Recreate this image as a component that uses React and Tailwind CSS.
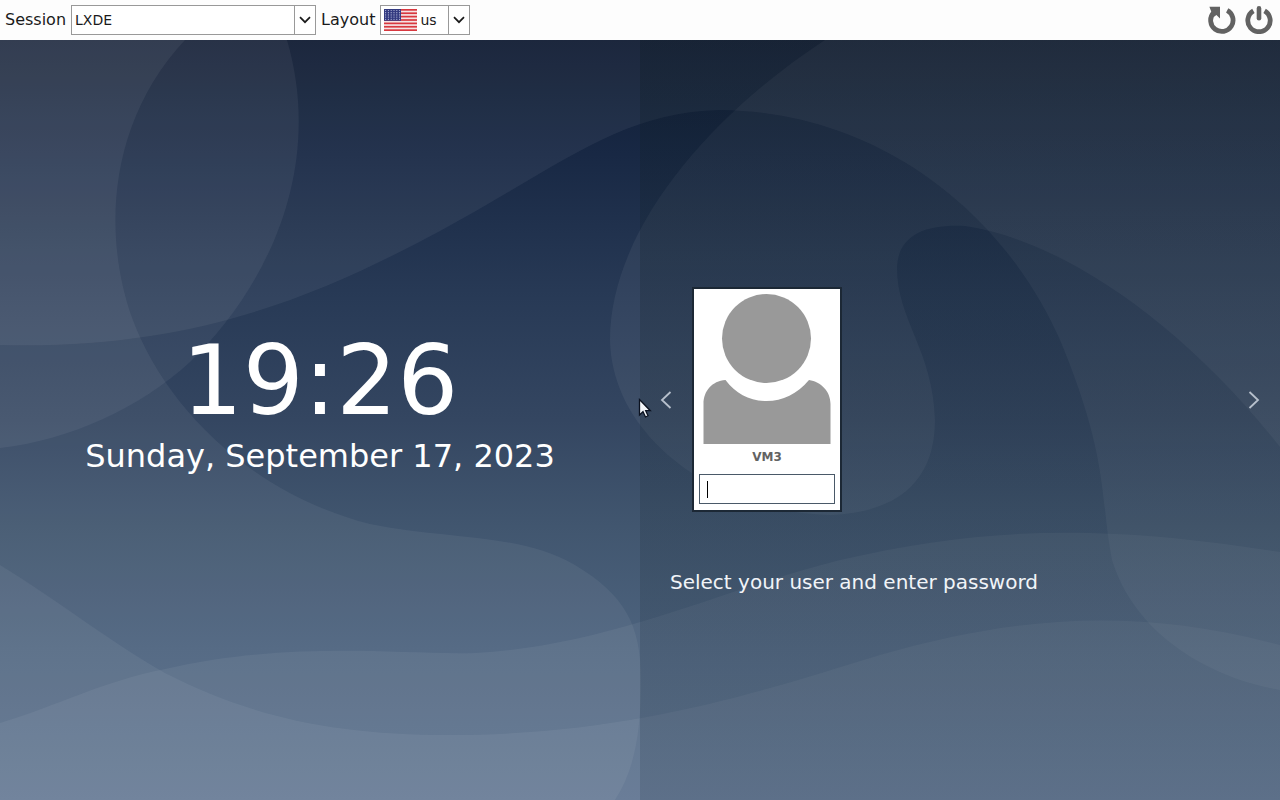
import React from "react";

const WAVES = [
  // upper sky, above the long crest
  "M0 40V345C190 350 315 298 440 231C560 166 620 112 720 110C890 112 1010 225 1060 340C1110 460 1100 500 1112 560C1135 635 1210 678 1280 690V40Z",
  // round lobe on the left
  "M0 40H287C325 170 265 290 190 362C140 408 70 440 0 448Z",
  // left side and lower hill
  "M0 40H185C110 120 102 230 131 315C165 410 255 495 370 524C450 540 520 533 575 565C625 595 641 625 641 680C641 730 635 770 615 800H0Z",
  // big loop on the right
  "M825 40C710 115 610 230 610 340C612 440 720 513 830 515C910 512 935 470 935 420C933 350 897 320 897 268C898 235 925 224 965 226C1060 240 1180 320 1280 447V40Z",
  // bottom layers
  "M0 565C60 602 115 645 165 673C250 716 330 735 450 735C630 735 760 692 880 655C1010 618 1130 605 1280 645V800H0Z",
  "M0 723C60 705 100 682 165 669C290 640 400 655 475 653C610 646 720 590 840 560C990 525 1110 525 1280 552V800H0Z",
];

function Wallpaper() {
  return (
    <svg
      className="absolute inset-0 h-full w-full"
      viewBox="0 40 1280 760"
      preserveAspectRatio="none"
      aria-hidden="true"
    >
      <defs>
        <linearGradient id="night" gradientUnits="userSpaceOnUse" x1="0" y1="40" x2="0" y2="800">
          <stop offset="0" stopColor="#0f1b32" />
          <stop offset="0.15" stopColor="#182844" />
          <stop offset="0.34" stopColor="#283a56" />
          <stop offset="0.5" stopColor="#344661" />
          <stop offset="0.64" stopColor="#41566f" />
          <stop offset="0.8" stopColor="#4d637e" />
          <stop offset="1" stopColor="#596f8c" />
        </linearGradient>
      </defs>
      <rect y="40" width="1280" height="760" fill="url(#night)" />
      {WAVES.map((d) => (
        <path key={d} d={d} fill="#fff" fillOpacity="0.055" />
      ))}
    </svg>
  );
}

function ChevronDown() {
  return (
    <svg width="12" height="8" viewBox="0 0 12 8" fill="none" stroke="#1a1a1a" strokeWidth="1.7" aria-hidden="true">
      <path d="M1 1.2L6 6.2L11 1.2" />
    </svg>
  );
}

function Picker({ id, value, className, children }) {
  return (
    <div className={"relative flex h-[30px] items-center border border-[#999] bg-white " + className}>
      {children}
      <select
        id={id}
        className="h-full min-w-0 flex-1 appearance-none bg-transparent px-[3px] text-sm text-[#1a1a1a] outline-none"
      >
        <option>{value}</option>
      </select>
      <span className="pointer-events-none flex h-full w-[21px] shrink-0 items-center justify-center border-l border-[#999]">
        <ChevronDown />
      </span>
    </div>
  );
}

function Flag() {
  return (
    <svg className="ml-[3px] shrink-0" width="33" height="22" viewBox="0 0 33 22" aria-hidden="true">
      <rect width="33" height="22" fill="#f5e3e3" />
      {[0, 1, 2, 3, 4, 5, 6].map((i) => (
        <rect key={i} y={(i * 44) / 13} width="33" height="1.7" fill="#d8383f" />
      ))}
      <rect width="17" height="11.8" fill="#333a80" />
      {[0, 1, 2, 3, 4].map((r) =>
        [0, 1, 2, 3, 4, 5].map((c) => (
          <circle key={r + "-" + c} cx={1.6 + c * 2.8} cy={1.5 + r * 2.2} r="0.6" fill="#b9bddc" />
        ))
      )}
    </svg>
  );
}

function RestartIcon() {
  return (
    <svg width="28" height="28" viewBox="0 0 28 28" aria-hidden="true">
      <path d="M19.2 4.4A11.2 11.2 0 1 1 5.4 6.9" fill="none" stroke="#626262" strokeWidth="4.8" />
      <path d="M1.4 0.8H12V12.6L8.4 9L5 11.4L3.2 5.4Z" fill="#626262" />
    </svg>
  );
}

function PowerIcon() {
  return (
    <svg width="28" height="28" viewBox="0 0 28 28" fill="none" stroke="#626262" aria-hidden="true">
      <path d="M19.6 4.8A11.2 11.2 0 1 1 8.4 4.8" strokeWidth="4.8" />
      <path d="M14 2.4V12.2" strokeWidth="4.6" strokeLinecap="round" />
    </svg>
  );
}

function Avatar() {
  return (
    <svg className="block w-full" viewBox="0 0 136 150" fill="#999" aria-hidden="true">
      <circle cx="67.5" cy="44.5" r="44.5" />
      <path d="M4.500 150V110C4.500 97 13 87 26.500 86C37 100 51 107 67.500 107C84 107 98 100 110 86C122 88 131.500 97 131.500 110V150Z" />
    </svg>
  );
}

function UserCard() {
  return (
    <section className="flex w-[150px] flex-col border-2 border-[#1c2835] bg-white px-[5px] pt-[5px] pb-1.5">
      <Avatar />
      <label htmlFor="password" className="mb-1 text-center text-xs leading-[26px] font-bold text-[#636363]">
        VM3
      </label>
      <div className="flex h-[30px] items-center border border-[#4a5968] pl-[7px]">
        <span className="h-[17px] w-px shrink-0 bg-black" />
        <input
          id="password"
          type="password"
          className="h-full min-w-0 flex-1 bg-transparent text-sm text-black caret-transparent outline-none"
        />
      </div>
    </section>
  );
}

function Arrow({ label, d }) {
  return (
    <button type="button" aria-label={label} className="flex w-3 items-center justify-center">
      <svg width="12" height="18" viewBox="0 0 12 18" fill="none" stroke="#b7c0cc" strokeWidth="1.8" aria-hidden="true">
        <path d={d} />
      </svg>
    </button>
  );
}

function Pointer() {
  return (
    <svg
      className="pointer-events-none absolute top-[358px] left-1/2 -ml-0.5"
      width="14"
      height="20"
      viewBox="0 0 14 20"
      aria-hidden="true"
    >
      <path
        d="M1.500 1.500V17L5 13.700L7.500 19L10 17.800L7.700 12.700H12.300Z"
        fill="#f4f7fb"
        stroke="#0b1220"
        strokeWidth="1.300"
      />
    </svg>
  );
}

export default function App() {
  return (
    <div className="flex min-h-screen flex-col font-['DejaVu_Sans',sans-serif]">
      <header className="flex h-10 items-center justify-between bg-[#fdfdfd] pr-[7px] pl-[5px] text-base text-[#1a1a1a]">
        <div className="flex items-center gap-[5px]">
          <label htmlFor="session">Session</label>
          <Picker id="session" value="LXDE" className="w-[245px]" />
          <label htmlFor="layout">Layout</label>
          <Picker id="layout" value="us" className="w-[90px]">
            <Flag />
          </Picker>
        </div>
        <div className="flex items-center gap-[9px]">
          <button type="button" aria-label="Restart">
            <RestartIcon />
          </button>
          <button type="button" aria-label="Shut down">
            <PowerIcon />
          </button>
        </div>
      </header>

      <main className="relative flex flex-1 overflow-hidden">
        <Wallpaper />
        <section className="relative flex flex-1 flex-col items-center justify-center pb-10 text-white">
          <time className="text-8xl leading-[112px]">19:26</time>
          <p className="text-[32px] leading-[38px]">Sunday, September 17, 2023</p>
        </section>
        <section className="relative grid flex-1 grid-rows-[1fr_auto_1fr] bg-linear-to-b from-[#0c1a22]/28 to-[#34465a]/24 pb-[41px]">
          <div className="row-start-2 flex items-center gap-5 px-5">
            <Arrow label="Previous user" d="M10.500 1L2 9L10.500 17" />
            <div className="flex flex-1">
              <UserCard />
            </div>
            <Arrow label="Next user" d="M1.500 1L10 9L1.500 17" />
          </div>
          <p className="row-start-3 pt-14 pl-[30px] text-xl leading-7 text-[#f1f4f8]">
            Select your user and enter password
          </p>
        </section>
        <Pointer />
      </main>
    </div>
  );
}
